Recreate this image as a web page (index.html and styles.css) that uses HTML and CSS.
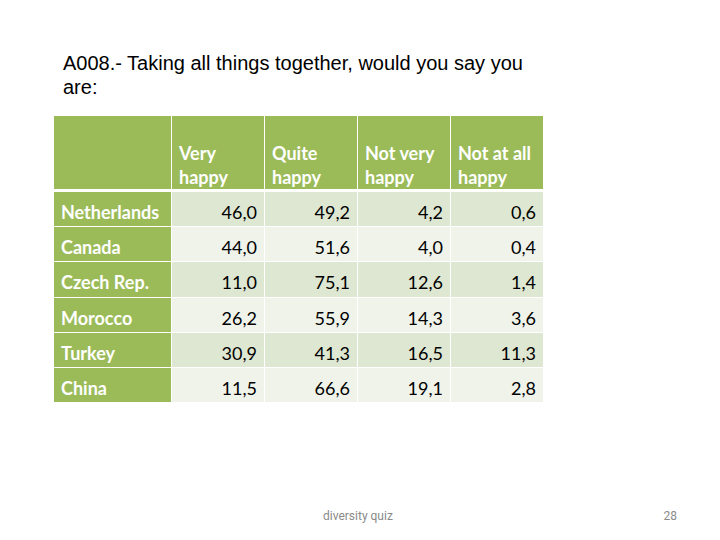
FILE: index.html
```html
<!DOCTYPE html>
<html>
<head>
<meta charset="utf-8">
<link rel="stylesheet" href="styles.css">
</head>
<body>
<div class="slide">
  <h1 class="title">A008.- Taking all things together, would you say you<br>are:</h1>
  <table class="data">
    <thead>
      <tr>
        <th class="corner"></th>
        <th>Very<br>happy</th>
        <th>Quite<br>happy</th>
        <th>Not very<br>happy</th>
        <th>Not at all<br>happy</th>
      </tr>
    </thead>
    <tbody>
      <tr class="b1"><th>Netherlands</th><td>46,0</td><td>49,2</td><td>4,2</td><td>0,6</td></tr>
      <tr class="b2"><th>Canada</th><td>44,0</td><td>51,6</td><td>4,0</td><td>0,4</td></tr>
      <tr class="b1"><th>Czech Rep.</th><td>11,0</td><td>75,1</td><td>12,6</td><td>1,4</td></tr>
      <tr class="b2"><th>Morocco</th><td>26,2</td><td>55,9</td><td>14,3</td><td>3,6</td></tr>
      <tr class="b1"><th>Turkey</th><td>30,9</td><td>41,3</td><td>16,5</td><td>11,3</td></tr>
      <tr class="b2"><th>China</th><td>11,5</td><td>66,6</td><td>19,1</td><td>2,8</td></tr>
    </tbody>
  </table>
  <div class="footer">
    <span class="foot-center">diversity quiz</span>
    <span class="foot-num">28</span>
  </div>
</div>
</body>
</html>
```

FILE: styles.css
```css
html, body {
  margin: 0;
  padding: 0;
  background: #ffffff;
}

.slide {
  width: 720px;
  height: 540px;
  box-sizing: border-box;
  padding: 51px 0 0 0;
  display: flex;
  flex-direction: column;
}

.title {
  margin: 0 0 0 63px;
  font-family: "Liberation Sans", Arial, sans-serif;
  font-weight: normal;
  font-size: 20px;
  line-height: 24px;
  color: #000000;
}

.data {
  margin: 17px 0 0 54px;
  border-collapse: separate;
  border-spacing: 0;
  font-family: Lato, "Open Sans", sans-serif;
  font-size: 18px;
  line-height: 22px;
  table-layout: fixed;
  width: 489px;
}

.data th,
.data td {
  box-sizing: border-box;
}

.data thead th {
  background: #9bbb59;
  color: #ffffff;
  font-weight: bold;
  text-align: left;
  vertical-align: bottom;
  line-height: 24px;
  height: 76px;
  padding: 0 4px 0 7px;
  border-left: 1px solid #ffffff;
  border-bottom: 3px solid #ffffff;
  width: 93px;
}

.data thead th.corner {
  width: 117px;
  border-left: none;
}

.data tbody th,
.data tbody td {
  height: 35.2px;
  border-bottom: 1px solid #ffffff;
  vertical-align: top;
}

.data tbody th {
  background: #9bbb59;
  color: #ffffff;
  font-weight: bold;
  text-align: left;
  padding: 9px 4px 0 7px;
}

.data tbody td {
  color: #000000;
  text-align: right;
  padding: 9px 7px 0 4px;
  border-left: 1px solid #ffffff;
}

.b1 td { background: #dee7d1; }
.b2 td { background: #eff3ea; }

.footer {
  margin-top: auto;
  height: 36px;
  display: flex;
  font-family: Roboto, "Liberation Sans", sans-serif;
  font-size: 12px;
  color: #8a8a8a;
}

.foot-center {
  margin-left: 323px;
  margin-top: 5px;
}

.foot-num {
  margin-left: auto;
  margin-right: 43px;
  margin-top: 5px;
}
```
